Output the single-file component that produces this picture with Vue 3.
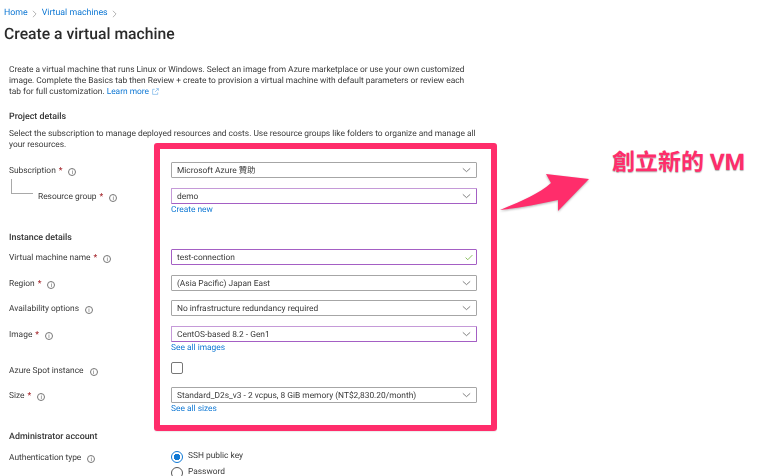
<script setup>
const chevron = 'M1 1.5 L5.5 5.5 L10 1.5'
</script>

<template>
  <div class="page">
    <div class="content">
      <nav class="crumbs">
        <a>Home</a><svg class="sep" viewBox="0 0 6 10"><path d="M1 1l4 4-4 4" /></svg>
        <a>Virtual machines</a><svg class="sep" viewBox="0 0 6 10"><path d="M1 1l4 4-4 4" /></svg>
      </nav>
      <h1>Create a virtual machine</h1>

      <section class="body">
        <p class="intro">
          Create a virtual machine that runs Linux or Windows. Select an image from Azure marketplace or use your own customized<br />
          image. Complete the Basics tab then Review + create to provision a virtual machine with default parameters or review each<br />
          tab for full customization. <a>Learn more</a>
          <svg class="ext" viewBox="0 0 8 8"><path d="M3 1.5H.7v5.8h5.8V5M3.5 4.5L7.3.7M4.8.7h2.5v2.5" /></svg>
        </p>

        <h2 class="project">Project details</h2>
        <p class="desc">
          Select the subscription to manage deployed resources and costs. Use resource groups like folders to organize and manage all<br />
          your resources.
        </p>

        <div class="row r-sub">
          <div class="lab">Subscription <b>*</b><i class="info">i</i></div>
          <div class="select">
            <span>Microsoft Azure 贊助</span>
            <svg class="chev" viewBox="0 0 11 7"><path :d="chevron" /></svg>
          </div>
        </div>
        <div class="row r-rg">
          <div class="lab nested"><span class="tree"></span>Resource group <b>*</b><i class="info">i</i></div>
          <div>
            <div class="select edited">
              <span>demo</span>
              <svg class="chev" viewBox="0 0 11 7"><path :d="chevron" /></svg>
            </div>
            <a class="under">Create new</a>
          </div>
        </div>

        <h2 class="instance">Instance details</h2>
        <div class="row r-vm">
          <div class="lab">Virtual machine name <b>*</b><i class="info">i</i></div>
          <div class="select edited strong">
            <span>test-connection</span>
            <svg class="check" viewBox="0 0 9 7"><path d="M.7 3.6l2.4 2.4L8.3.8" /></svg>
          </div>
        </div>
        <div class="row r-next">
          <div class="lab">Region <b>*</b><i class="info">i</i></div>
          <div class="select">
            <span>(Asia Pacific) Japan East</span>
            <svg class="chev" viewBox="0 0 11 7"><path :d="chevron" /></svg>
          </div>
        </div>
        <div class="row r-avail">
          <div class="lab">Availability options<i class="info">i</i></div>
          <div class="select">
            <span>No infrastructure redundancy required</span>
            <svg class="chev" viewBox="0 0 11 7"><path :d="chevron" /></svg>
          </div>
        </div>
        <div class="row r-next">
          <div class="lab">Image <b>*</b><i class="info">i</i></div>
          <div>
            <div class="select edited">
              <span>CentOS-based 8.2 - Gen1</span>
              <svg class="chev" viewBox="0 0 11 7"><path :d="chevron" /></svg>
            </div>
            <a class="under">See all images</a>
          </div>
        </div>
        <div class="row r-spot">
          <div class="lab">Azure Spot instance<i class="info">i</i></div>
          <div><span class="checkbox"></span></div>
        </div>
        <div class="row r-size">
          <div class="lab">Size <b>*</b><i class="info">i</i></div>
          <div>
            <div class="select">
              <span>Standard_D2s_v3 - 2 vcpus, 8 GiB memory (NT$2,830.20/month)</span>
              <svg class="chev" viewBox="0 0 11 7"><path :d="chevron" /></svg>
            </div>
            <a class="under">See all sizes</a>
          </div>
        </div>

        <h2 class="admin">Administrator account</h2>
        <div class="row r-auth">
          <div class="lab">Authentication type<i class="info">i</i></div>
          <div class="radios">
            <label><span class="radio on"></span>SSH public key</label>
            <label><span class="radio"></span>Password</label>
          </div>
        </div>
      </section>
    </div>

    <div class="highlight"></div>
    <svg class="arrow" viewBox="0 0 100 60">
      <path d="M1 38 C20 30 40 22 52 11 L47 2 L90 7 L59 39 L59 28 C40 32 20 36 1 38 Z" />
    </svg>
    <div class="callout">創立新的 VM</div>
  </div>
</template>

<style>
html, body { margin: 0; background: #fff; }
</style>

<style scoped>
.page {
  position: relative;
  width: 775px;
  height: 476px;
  overflow: hidden;
  background: #fff;
  color: #3a3a3a;
  font-family: Roboto, "Noto Sans CJK TC", sans-serif;
  font-size: 8.4px;
  line-height: 11.2px;
  text-rendering: geometricPrecision;
}
.content { filter: blur(.3px); }
a { color: #0f78d4; }
p { margin: 0; }
.crumbs {
  display: flex;
  align-items: center;
  padding: 8px 0 0 4px;
  height: 12px;
  font-size: 8.8px;
}
.sep { width: 5px; height: 8px; margin: 0 4.5px; fill: none; stroke: #8a8a8a; stroke-width: .8; }
h1 {
  margin: 4px 0 0 4px;
  font-size: 15.7px;
  line-height: 20px;
  font-weight: 500;
  color: #2b2b2b;
}
.body { padding-left: 9px; }
.intro { margin-top: 21px; }
.ext { width: 7px; height: 7px; margin-left: 3px; vertical-align: -1px; fill: none; stroke: #4a9ae0; stroke-width: .6; }
h2 {
  margin: 0;
  font-size: 8.9px;
  line-height: 12px;
  font-weight: 500;
  color: #333;
}
.project { margin-top: 12px; }
.desc { margin-top: 6px; }
.row {
  display: grid;
  grid-template-columns: 162px 306px;
  align-items: start;
}
.r-sub { margin-top: 11px; }
.r-rg { margin-top: 10px; }
.instance { margin-top: 16px; }
.r-vm { margin-top: 5px; }
.r-next { margin-top: 10px; }
.r-avail { margin-top: 9px; }
.r-spot { margin-top: 8px; }
.r-size { margin-top: 9px; }
.admin { margin-top: 16px; }
.r-auth { margin-top: 6px; }
.lab {
  display: flex;
  align-items: center;
  box-sizing: border-box;
  height: 16px;
  padding-top: 4px;
}
.lab b { color: #a4262c; font-weight: 500; margin-left: 3px; }
.nested { padding-left: 29px; position: relative; }
.tree {
  position: absolute;
  left: 2px;
  top: -9px;
  width: 21px;
  height: 14px;
  border-left: 1px solid #a9a9a9;
  border-bottom: 1px solid #a9a9a9;
}
.info {
  display: inline-flex;
  align-items: center;
  justify-content: center;
  box-sizing: border-box;
  width: 8px;
  height: 8px;
  margin-left: 6px;
  border: .7px solid #777;
  border-radius: 50%;
  color: #666;
  font-size: 6px;
  line-height: 7px;
  font-style: normal;
}
.select {
  display: flex;
  align-items: center;
  justify-content: space-between;
  box-sizing: border-box;
  height: 16px;
  padding: 0 5px;
  border: 1px solid #a6a6a6;
  border-radius: 1px;
}
.select span { margin-top: 4px; }
.edited { border-color: #c59ad8; border-right-color: #a45fc4; border-bottom-color: #a45fc4; }
.strong { border-color: #a45fc4; }
.chev { width: 9px; height: 6px; fill: none; stroke: #555; stroke-width: .9; }
.check { width: 8px; height: 7px; fill: none; stroke: #7ab648; stroke-width: 1; margin-right: -2px; }
.under { display: block; margin-top: 1px; height: 11px; }
.checkbox {
  display: block;
  box-sizing: border-box;
  width: 12px;
  height: 12px;
  border: 1px solid #777;
  border-radius: 2px;
}
.radios { display: flex; flex-direction: column; gap: 5px; margin-top: 2px; }
.radios label { display: flex; align-items: center; height: 11px; }
.radio {
  box-sizing: border-box;
  width: 12px;
  height: 12px;
  margin-right: 5px;
  border: 1px solid #555;
  border-radius: 50%;
}
.radio.on {
  border-color: #0f78d4;
  background: radial-gradient(circle, #0f78d4 3px, transparent 3.4px);
}
.highlight {
  position: absolute;
  left: 154px;
  top: 143px;
  width: 343px;
  height: 288px;
  box-sizing: border-box;
  border: 6px solid #ff2d6b;
  border-radius: 3px;
  box-shadow: 0 1px 1px rgba(0, 0, 0, .08);
}
.arrow {
  position: absolute;
  left: 499px;
  top: 172px;
  width: 100px;
  height: 60px;
  fill: #ff2d6b;
  filter: drop-shadow(0 1px 1px rgba(0, 0, 0, .3));
}
.callout {
  position: absolute;
  left: 612px;
  top: 150px;
  font-size: 23px;
  line-height: 26px;
  font-weight: 700;
  color: #ff2d6b;
  text-shadow: 0 1px 1px rgba(0, 0, 0, .3);
  white-space: nowrap;
}
</style>
